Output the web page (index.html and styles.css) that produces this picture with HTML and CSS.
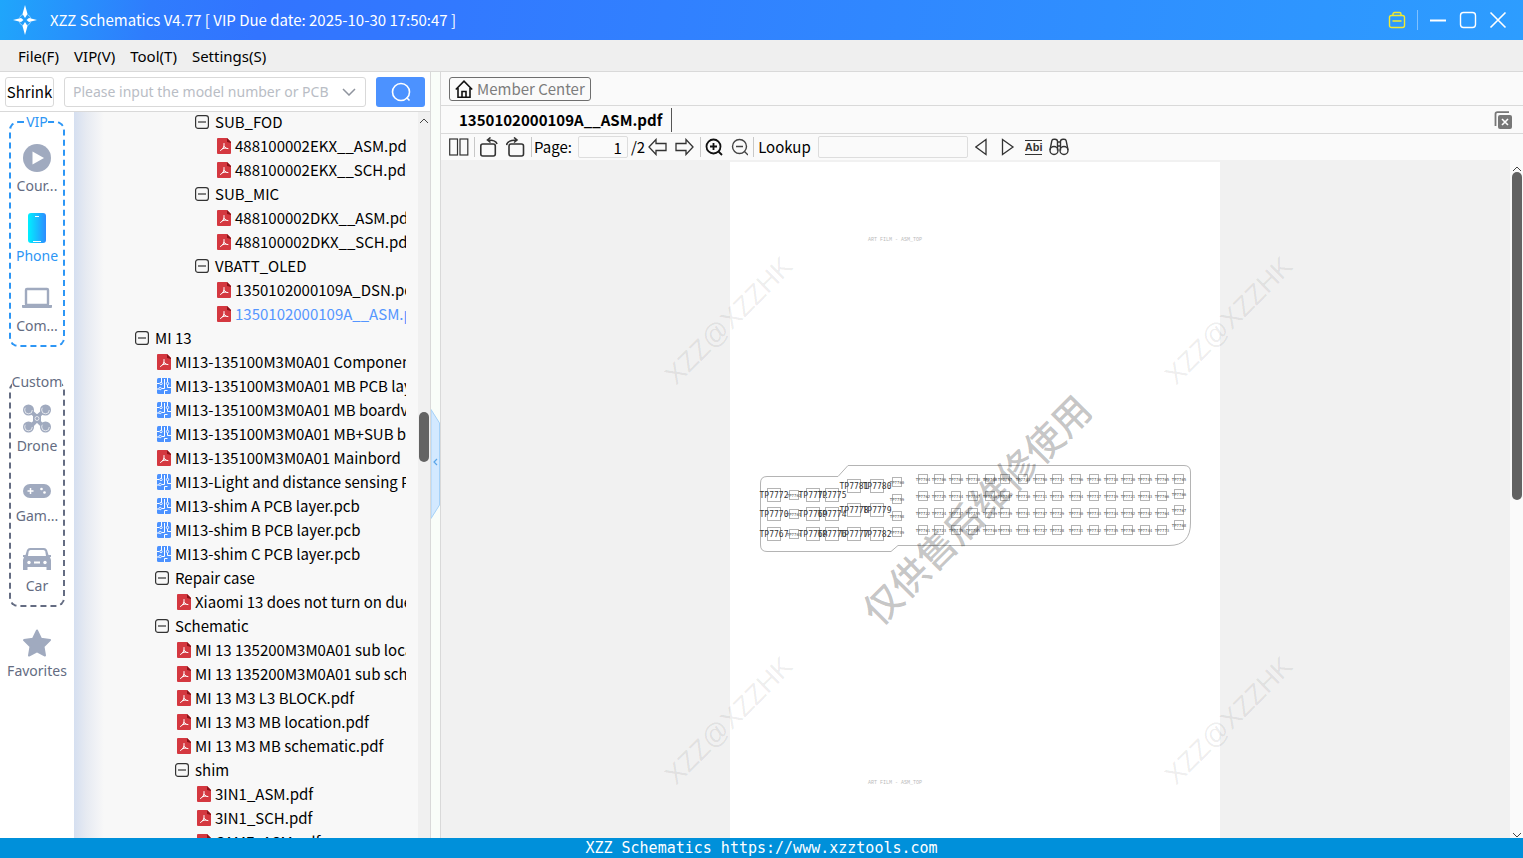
FILE: index.html
```html
<!DOCTYPE html>
<html lang="en-US" dir="ltr">
<head>
  <title>XZZ Schematics</title>
  <meta charset="UTF-8">
  <meta name="viewport" content="width=device-width, initial-scale=1">
  <link rel="stylesheet" href="styles.css">
</head>
<body>
  <svg class="sprite" aria-hidden="true">
    <symbol id="i-minus" viewBox="0 0 14 14"><rect x=".6" y=".6" width="12.8" height="12.8" rx="2.5" fill="none" stroke="#333" stroke-width="1.2"/><path d="M3 7h8" stroke="#333" stroke-width="1.2"/></symbol>
    <symbol id="i-pdf" viewBox="0 0 14 16"><path d="M1 0h9l4 4v11a1 1 0 0 1-1 1H1a1 1 0 0 1-1-1V1a1 1 0 0 1 1-1z" fill="#d43840"/><path d="M10 0l4 4v1l-4-1z" fill="#8c1219"/><path d="M7 5.500v3M7 8.500Q6.500 11 3.500 12.500M5.500 10.500Q8 9.500 11 10.500M7 8.500l2 1.500" fill="none" stroke="#fff" stroke-width="1" stroke-linecap="round"/></symbol>
    <symbol id="i-pcb" viewBox="0 0 14 16"><rect width="14" height="16" rx="1.500" fill="#4c92ff"/><path d="M4.500 0v4.500M0 5.500h2.500M7.500 1v9.500H4.500M10.500 0v4M10.500 7v2.500H14M7.500 16v-3.500h3M0 11h2" fill="none" stroke="#fff" stroke-width="1"/><g fill="#4c92ff" stroke="#fff" stroke-width=".9"><circle cx="4" cy="5.500" r="1.200"/><circle cx="3.200" cy="10.500" r="1.200"/><circle cx="10.500" cy="5.500" r="1.200"/></g></symbol>
  </svg>

  <header class="titlebar">
    <svg class="logo" width="24" height="30" viewBox="0 0 24 30"><circle cx="12" cy="15" r="6" fill="none" stroke="#8fd0ff" stroke-width="1" stroke-dasharray="6 3.400" stroke-dashoffset="-2"/><path d="M12 0l2.500 9L12 13 9.500 9zM12 30l2.500-9-2.500-4-2.500 4zM0 15l8-2 2.500 2L8 17zM24 15l-8-2-2.500 2 2.500 2z" fill="#fff"/></svg>
    <h1>XZZ Schematics V4.77 [ VIP Due date: 2025-10-30 17:50:47 ]</h1>
    <div class="window-buttons">
      <button aria-label="Toolbox"><svg width="18" height="18" viewBox="0 0 18 18" fill="none" stroke="#f2ea30" stroke-width="1.400"><rect x="1.500" y="4.500" width="15" height="12" rx="2"/><path d="M5 4.500V3a1.500 1.500 0 0 1 1.500-1.500h5A1.500 1.500 0 0 1 13 3v1.500M4.500 10h9"/></svg></button>
      <i class="split"></i>
      <button aria-label="Minimize"><svg width="18" height="18" viewBox="0 0 18 18"><path d="M1 9.500h16" stroke="#fff" stroke-width="2"/></svg></button>
      <button aria-label="Maximize"><svg width="18" height="18" viewBox="0 0 18 18"><rect x="1.500" y="1.500" width="15" height="15" rx="3" fill="none" stroke="#fff" stroke-width="1.400"/></svg></button>
      <button aria-label="Close"><svg width="18" height="18" viewBox="0 0 18 18"><path d="M1.500 1.500l15 15M16.500 1.500l-15 15" stroke="#fff" stroke-width="1.600"/></svg></button>
    </div>
  </header>

  <nav class="menubar">
    <button>File(F)</button>
    <button>VIP(V)</button>
    <button>Tool(T)</button>
    <button>Settings(S)</button>
  </nav>

  <main class="workspace">
    <section class="left">
      <form class="search">
        <button class="shrink" type="button">Shrink</button>
        <div class="combo">
          <input type="text" placeholder="Please input the model number or PCB" aria-label="Model number or PCB">
          <svg width="14" height="8" viewBox="0 0 14 8"><path d="M1 1l6 6 6-6" fill="none" stroke="#8f949e" stroke-width="1.500"/></svg>
        </div>
        <button class="go" type="submit" aria-label="Search"><svg width="20" height="20" viewBox="0 0 20 20" fill="none" stroke="#fff" stroke-width="1.600"><circle cx="10" cy="10" r="8.500"/><path d="M15.500 15.500l3 3"/></svg></button>
      </form>

      <div class="browser">
        <nav class="sidebar">
          <fieldset class="group vip">
            <legend>VIP</legend>
            <a class="cat" href="#"><svg width="30" height="30" viewBox="0 0 30 30"><circle cx="15" cy="15" r="14" fill="#a0aabf"/><path d="M10.500 8.500l11.500 6.500-11.500 6.500z" fill="#fff"/></svg>Cour...</a>
            <a class="cat active" href="#"><svg width="30" height="30" viewBox="0 0 30 30"><defs><linearGradient id="phone"><stop offset="0" stop-color="#00f0ff"/><stop offset="1" stop-color="#2d8cff"/></linearGradient></defs><rect x="6" width="18" height="30" rx="3" fill="url(#phone)"/><path d="M13 3.500h4M11 28.500h8" stroke="#fff" stroke-width="1"/></svg>Phone</a>
            <a class="cat" href="#"><svg width="30" height="30" viewBox="0 0 30 30"><rect x="4" y="6" width="22" height="16" rx="1" fill="none" stroke="#a0aabf" stroke-width="2.400"/><path d="M0 22h11.500l1 1h5l1-1H30v2.500l-1 .5H1l-1-.5z" fill="#a0aabf"/></svg>Com...</a>
          </fieldset>
          <fieldset class="group custom">
            <legend>Custom</legend>
            <a class="cat" href="#"><svg width="30" height="30" viewBox="0 0 30 30"><path d="M6 6l9 8 9-8M6 26l9-9 9 9" stroke="#a0aabf" stroke-width="4" fill="none"/><g fill="#a0aabf"><circle cx="6.500" cy="7" r="5.500"/><circle cx="23.500" cy="7" r="5.500"/><circle cx="6.500" cy="24" r="5.500"/><circle cx="23.500" cy="24" r="5.500"/><rect x="11" y="11" width="8" height="9" rx="2"/></g><g fill="none" stroke="#fff" stroke-width=".7"><circle cx="15" cy="15.500" r="2"/><circle cx="6.500" cy="7" r="3.800" stroke-dasharray="14 10"/><circle cx="23.500" cy="7" r="3.800" stroke-dasharray="14 10"/><circle cx="6.500" cy="24" r="3.800" stroke-dasharray="14 10"/><circle cx="23.500" cy="24" r="3.800" stroke-dasharray="14 10"/></g></svg>Drone</a>
            <a class="cat" href="#"><svg width="30" height="30" viewBox="0 0 30 30"><rect x="1" y="11" width="28" height="14" rx="7" fill="#a0aabf"/><path d="M5.500 18h6M8.500 15v6" stroke="#fff" stroke-width="1.500"/><circle cx="19.500" cy="16" r="1.300" fill="#fff"/><circle cx="22.500" cy="19.500" r="1.300" fill="#fff"/></svg>Gam...</a>
            <a class="cat" href="#"><svg width="30" height="30" viewBox="0 0 30 30"><path d="M8 5h14q2 0 3 2l1.500 5H29v2h-1l1 3v10h-4.500v-3h-19v3H1V17l1-3H1v-2h2.500L5 7q1-2 3-2z" fill="#a0aabf"/><path d="M8.500 7h13q1.300 0 1.800 1.500L24 13H6l.7-4.500Q7.200 7 8.500 7z" fill="#fff"/><g fill="#fff"><circle cx="7" cy="19.500" r="1.700"/><circle cx="23" cy="19.500" r="1.700"/><rect x="12" y="18.500" width="6" height="2"/></g></svg>Car</a>
          </fieldset>
          <a class="cat fav" href="#"><svg width="30" height="30" viewBox="0 0 30 30"><path d="M15 2.500l4 8.300 9 1.300-6.500 6.400 1.500 9L15 23.300 7 27.500l1.500-9L2 12.100l9-1.300z" fill="#a0aabf" stroke="#a0aabf" stroke-width="2" stroke-linejoin="round"/></svg>Favorites</a>
        </nav>

        <ul class="tree">
          <li class="lv3"><button><svg><use href="#i-minus"/></svg>SUB_FOD</button></li>
          <li class="lv4"><a href="#"><svg><use href="#i-pdf"/></svg>488100002EKX__ASM.pdf</a></li>
          <li class="lv4"><a href="#"><svg><use href="#i-pdf"/></svg>488100002EKX__SCH.pdf</a></li>
          <li class="lv3"><button><svg><use href="#i-minus"/></svg>SUB_MIC</button></li>
          <li class="lv4"><a href="#"><svg><use href="#i-pdf"/></svg>488100002DKX__ASM.pdf</a></li>
          <li class="lv4"><a href="#"><svg><use href="#i-pdf"/></svg>488100002DKX__SCH.pdf</a></li>
          <li class="lv3"><button><svg><use href="#i-minus"/></svg>VBATT_OLED</button></li>
          <li class="lv4"><a href="#"><svg><use href="#i-pdf"/></svg>1350102000109A_DSN.pdf</a></li>
          <li class="lv4 selected"><a href="#"><svg><use href="#i-pdf"/></svg>1350102000109A__ASM.pdf</a></li>
          <li class="lv0"><button><svg><use href="#i-minus"/></svg>MI 13</button></li>
          <li class="lv1"><a href="#"><svg><use href="#i-pdf"/></svg>MI13-135100M3M0A01 Component</a></li>
          <li class="lv1"><a href="#"><svg><use href="#i-pcb"/></svg>MI13-135100M3M0A01 MB PCB layer</a></li>
          <li class="lv1"><a href="#"><svg><use href="#i-pcb"/></svg>MI13-135100M3M0A01 MB boardview</a></li>
          <li class="lv1"><a href="#"><svg><use href="#i-pcb"/></svg>MI13-135100M3M0A01 MB+SUB board</a></li>
          <li class="lv1"><a href="#"><svg><use href="#i-pdf"/></svg>MI13-135100M3M0A01 Mainbord</a></li>
          <li class="lv1"><a href="#"><svg><use href="#i-pcb"/></svg>MI13-Light and distance sensing PCB</a></li>
          <li class="lv1"><a href="#"><svg><use href="#i-pcb"/></svg>MI13-shim A PCB layer.pcb</a></li>
          <li class="lv1"><a href="#"><svg><use href="#i-pcb"/></svg>MI13-shim B PCB layer.pcb</a></li>
          <li class="lv1"><a href="#"><svg><use href="#i-pcb"/></svg>MI13-shim C PCB layer.pcb</a></li>
          <li class="lv1"><button><svg><use href="#i-minus"/></svg>Repair case</button></li>
          <li class="lv2"><a href="#"><svg><use href="#i-pdf"/></svg>Xiaomi 13 does not turn on due to</a></li>
          <li class="lv1"><button><svg><use href="#i-minus"/></svg>Schematic</button></li>
          <li class="lv2"><a href="#"><svg><use href="#i-pdf"/></svg>MI 13 135200M3M0A01 sub location</a></li>
          <li class="lv2"><a href="#"><svg><use href="#i-pdf"/></svg>MI 13 135200M3M0A01 sub schematic</a></li>
          <li class="lv2"><a href="#"><svg><use href="#i-pdf"/></svg>MI 13 M3 L3 BLOCK.pdf</a></li>
          <li class="lv2"><a href="#"><svg><use href="#i-pdf"/></svg>MI 13 M3 MB location.pdf</a></li>
          <li class="lv2"><a href="#"><svg><use href="#i-pdf"/></svg>MI 13 M3 MB schematic.pdf</a></li>
          <li class="lv2"><button><svg><use href="#i-minus"/></svg>shim</button></li>
          <li class="lv3"><a href="#"><svg><use href="#i-pdf"/></svg>3IN1_ASM.pdf</a></li>
          <li class="lv3"><a href="#"><svg><use href="#i-pdf"/></svg>3IN1_SCH.pdf</a></li>
          <li class="lv3"><a href="#"><svg><use href="#i-pdf"/></svg>CAMF_ASM.pdf</a></li>
        </ul>

        <div class="scrollbar tree-scroll">
          <svg width="10" height="6" viewBox="0 0 10 6"><path d="M1 5l4-4 4 4" fill="none" stroke="#444"/></svg>
          <div class="thumb"></div>
        </div>
      </div>
    </section>

    <div class="divider">
      <button aria-label="Collapse panel"><svg width="9" height="110" viewBox="0 0 9 110"><path d="M0 .5L8.500 14V96L0 109.500z" fill="#d3e9ff" stroke="#a5d1f7"/><path d="M6 50L3 53l3 3" fill="none" stroke="#5aa5e8" stroke-width="1.200"/></svg></button>
    </div>

    <section class="right">
      <div class="member-row">
        <button class="member"><svg width="18" height="18" viewBox="0 0 18 18" fill="none" stroke="#111" stroke-width="1.600"><path d="M.8 9.500L9 1.200l8.200 8.300M3 8v9.200h12V8M7 17v-5.500h4V17"/></svg>Member Center</button>
      </div>
      <div class="tabs">
        <button class="tab">1350102000109A__ASM.pdf</button>
        <button class="close-all" aria-label="Close all tabs"><svg width="18" height="18" viewBox="0 0 18 18"><path d="M1.500 15V3Q1.500 1.200 3.500 1.200H15" fill="none" stroke="#777" stroke-width="1.800"/><rect x="4" y="4" width="14" height="14" rx="2" fill="#777"/><path d="M8 8l6 6M14 8l-6 6" stroke="#fff" stroke-width="1.600"/></svg></button>
      </div>
      <div class="toolbar">
        <button aria-label="Two pages"><svg width="20" height="18" viewBox="0 0 20 18" fill="none" stroke="#333" stroke-width="1.200"><rect x=".7" y="1" width="7.800" height="16"/><rect x="11" y="1" width="7.800" height="16"/></svg></button>
        <i class="sep"></i>
        <button aria-label="Rotate left"><svg width="20" height="20" viewBox="0 0 20 20" fill="none" stroke="#333" stroke-width="1.600"><rect x="1.800" y="7" width="14.500" height="12" rx="2"/><path d="M18 7q-1-4-9-4M11.500 .5L8.500 3l3 2.500"/></svg></button>
        <button aria-label="Rotate right"><svg width="20" height="20" viewBox="0 0 20 20" fill="none" stroke="#333" stroke-width="1.600"><rect x="3" y="7" width="14.500" height="12" rx="2"/><path d="M.5 8q1-5 10-5M8 .5L11 3 8 5.500"/></svg></button>
        <i class="sep"></i>
        <label class="page-label" for="page">Page:</label>
        <input id="page" class="page-no" type="text" value="1">
        <span class="total">/2</span>
        <button aria-label="Previous page"><svg width="20" height="18" viewBox="0 0 20 18" fill="none" stroke="#333" stroke-width="1.300"><path d="M1 9l7-7.500v4h10v7H8v4z"/></svg></button>
        <button aria-label="Next page"><svg width="20" height="18" viewBox="0 0 20 18" fill="none" stroke="#333" stroke-width="1.300"><path d="M18 9l-7-7.500v4H1v7h10v4z"/></svg></button>
        <i class="sep"></i>
        <button aria-label="Zoom in"><svg width="18" height="18" viewBox="0 0 18 18" fill="none" stroke="#111" stroke-width="1.800"><circle cx="8.500" cy="8.500" r="7"/><path d="M13.500 13.500l3.500 3.500M5 8.500h7M8.500 5v7"/></svg></button>
        <button aria-label="Zoom out"><svg width="18" height="18" viewBox="0 0 18 18" fill="none" stroke="#444" stroke-width="1.400"><circle cx="9.500" cy="8.500" r="7"/><path d="M14.500 13.500l3.500 3.500M6 8.500h7"/></svg></button>
        <i class="sep"></i>
        <label for="lookup">Lookup</label>
        <input id="lookup" class="lookup" type="text">
        <button aria-label="Find previous"><svg width="18" height="18" viewBox="0 0 18 18" fill="none" stroke="#333" stroke-width="1.300"><path d="M11 1.500v15L.8 9z"/></svg></button>
        <button aria-label="Find next"><svg width="18" height="18" viewBox="0 0 18 18" fill="none" stroke="#333" stroke-width="1.300"><path d="M2.500 1.500v15L13 9z"/></svg></button>
        <button class="match">Abi</button>
        <button aria-label="Find all"><svg width="20" height="18" viewBox="0 0 20 18" fill="none" stroke="#333" stroke-width="1.400"><circle cx="5" cy="12.500" r="4"/><circle cx="15" cy="12.500" r="4"/><path d="M1 12l1.800-9Q3 1.200 5 1.200h1q2.500 0 2.500 2.300v9M19 12l-1.800-9q-.2-1.800-2.200-1.800h-1q-2.500 0-2.500 2.300v9M8.500 4h3M8.500 8h3"/></svg></button>
      </div>

      <div class="viewer">
        <div class="canvas">
          <div class="sheet">
            <svg class="drawing" width="490" height="676" viewBox="0 0 490 676">
              <text class="film" x="138" y="79">ART FILM - ASM_TOP</text>
              <text class="film" x="138" y="622">ART FILM - ASM_TOP</text>
              <path class="outline" d="M37 314.500H108L118 303.500H454Q460.500 303.500 460.500 310V361Q460.500 383.500 439 383.500H168L161 389.500H37Q30.500 389.500 30.500 383V321Q30.500 314.500 37 314.500Z"/>
              <g id="pads"></g>
              <g class="mark">
                <text transform="translate(-2 158) rotate(-45)" dy="10">XZZ@XZZHK</text>
                <text transform="translate(498 158) rotate(-45)" dy="10">XZZ@XZZHK</text>
                <text transform="translate(-2 558) rotate(-45)" dy="10">XZZ@XZZHK</text>
                <text transform="translate(498 558) rotate(-45)" dy="10">XZZ@XZZHK</text>
              </g>
              <text class="notice" transform="translate(247 348) rotate(-45)" dy="14">仅供售后维修使用</text>
            </svg>
          </div>
        </div>
        <div class="scrollbar page-scroll">
          <svg width="10" height="6" viewBox="0 0 10 6"><path d="M1 5l4-4 4 4" fill="none" stroke="#444"/></svg>
          <div class="thumb"></div>
          <svg class="down" width="10" height="6" viewBox="0 0 10 6"><path d="M1 1l4 4 4-4" fill="none" stroke="#444"/></svg>
        </div>
      </div>
    </section>
  </main>

  <footer class="status">XZZ Schematics https://www.xzztools.com</footer>
  <script src="board.js"></script>
</body>
</html>
```
FILE: styles.css
```css
* {
  box-sizing: border-box;
}
body {
  color: #000;
  display: flex;
  flex-direction: column;
  font-family: "Noto Sans CJK SC", "Noto Sans", sans-serif;
  font-size: 15px;
  height: 100vh;
  line-height: 20px;
  margin: 0;
  overflow: hidden;
}
button {
  align-items: center;
  background: none;
  border: 0;
  color: inherit;
  display: flex;
  font: inherit;
  padding: 0;
}
input {
  font: inherit;
  min-width: 0;
}
a {
  color: inherit;
  text-decoration: none;
}
svg {
  flex: none;
}
.sprite {
  height: 0;
  position: absolute;
  width: 0;
}

/* TITLE AND MENU */
.titlebar {
  align-items: center;
  background: linear-gradient(100deg, #1fa6fb 0, #2f7cfd 150px, #3274ff 260px, #3279ff 450px, #2d9dff 100%);
  color: #FFF;
  display: flex;
  flex: none;
  height: 40px;
  padding: 0 16px 0 13px;
}
.titlebar h1 {
  flex: 1;
  font-size: 15px;
  font-weight: 400;
  margin: 0 0 0 13px;
}
.window-buttons {
  align-items: center;
  display: flex;
  gap: 12px;
}
.split {
  background: #7fc1ff;
  height: 20px;
  margin: 0 -1px;
  width: 1px;
}
.menubar {
  background: #EFEFEF;
  border-bottom: 1px solid #D9D9D9;
  display: flex;
  flex: none;
  font-family: "Noto Sans", sans-serif;
  gap: 15px;
  height: 32px;
  padding: 0 18px;
}
.workspace {
  display: flex;
  flex: 1;
  min-height: 0;
}

/* LEFT PANEL */
.left {
  border-right: 1px solid #D9D9D9;
  display: flex;
  flex: none;
  flex-direction: column;
  width: 431px;
}
.search {
  border-bottom: 1px solid #D9D9D9;
  display: flex;
  flex: none;
  gap: 10px;
  height: 40px;
  padding: 5px 5px 4px;
}
.shrink {
  border: 1px solid #D9D9D9;
  border-radius: 3px;
  height: 30px;
  justify-content: center;
  width: 49px;
}
.combo {
  align-items: center;
  border: 1px solid #D9D9D9;
  border-radius: 3px;
  display: flex;
  flex: 1;
  height: 30px;
  min-width: 0;
  padding: 0 9px 0 8px;
}
.combo input {
  background: none;
  border: 0;
  flex: 1;
  font: 14px/20px "Noto Sans", sans-serif;
  padding: 0;
}
.combo input::placeholder {
  color: #B9BDC5;
}
.go {
  background: #4C92FF;
  border-radius: 3px;
  height: 30px;
  justify-content: center;
  width: 49px;
}
.browser {
  display: flex;
  flex: 1;
  min-height: 0;
}
.sidebar {
  background: #FFF;
  color: #646C82;
  flex: none;
  font-family: "Noto Sans", sans-serif;
  font-size: 14px;
  width: 74px;
}
.group {
  border: 2px dashed currentColor;
  border-radius: 9px;
  margin: 0 9px 25px;
  min-width: 0;
  padding: 3px 0 0;
}
.group legend {
  height: 20px;
  margin: 0 auto;
  padding: 0;
}
.vip {
  border-color: #2D96F5;
}
.vip legend {
  color: #2D96F5;
}
.custom {
  margin-bottom: 13px;
}
.cat {
  align-items: center;
  display: flex;
  flex-direction: column;
  gap: 3px;
  height: 70px;
  padding-top: 8px;
  white-space: nowrap;
}
.cat.active {
  color: #2D96F5;
}
.tree {
  background: linear-gradient(90deg, #D5DFF0 0, #E6EAF2 12px, #F8F8F8 30px);
  flex: 1;
  list-style: none;
  margin: 0;
  min-width: 0;
  overflow: hidden;
  padding: 0 12px 0 61px;
}
.tree li {
  --lv: 0;
  height: 24px;
  overflow: hidden;
  padding-left: calc(var(--lv) * 20px);
  white-space: nowrap;
}
.tree li:first-child {
  margin-top: -2px;
}
.tree .lv1 { --lv: 1; }
.tree .lv2 { --lv: 2; }
.tree .lv3 { --lv: 3; }
.tree .lv4 { --lv: 4; }
.tree button,
.tree a {
  align-items: center;
  display: flex;
  gap: 6px;
  height: 24px;
}
.tree a {
  gap: 4px;
  padding-left: 2px;
}
.tree svg {
  height: 16px;
  width: 14px;
}
.selected {
  color: #5596FF;
}

/* SCROLLBARS */
.scrollbar {
  align-items: center;
  background: #F0F0F0;
  display: flex;
  flex: none;
  flex-direction: column;
  width: 12px;
}
.thumb {
  background: #636363;
  border-radius: 5px;
  width: 10px;
}
.tree-scroll {
  padding-top: 6px;
}
.tree-scroll .thumb {
  height: 50px;
  margin-top: 288px;
}
.page-scroll {
  background: #FAFAFA;
  padding-top: 6px;
  width: 13px;
}
.page-scroll .thumb {
  height: 328px;
}
.page-scroll .down {
  margin-top: auto;
}

/* DIVIDER */
.divider {
  align-items: center;
  background: #F9FDF9;
  border-right: 1px solid #D9D9D9;
  display: flex;
  flex: none;
  padding-top: 18px;
  width: 10px;
}

/* RIGHT PANEL */
.right {
  background: #FAFAFA;
  display: flex;
  flex: 1;
  flex-direction: column;
  min-width: 0;
}
.member-row {
  border-bottom: 1px solid #D9D9D9;
  flex: none;
  height: 34px;
  padding: 5px 8px;
}
.member {
  border: 1px solid #6E6E6E;
  border-radius: 3px;
  color: #7D7D7D;
  gap: 4px;
  height: 24px;
  padding: 0 5px;
}
.tabs {
  align-items: center;
  border-bottom: 1px solid #D9D9D9;
  display: flex;
  flex: none;
  height: 28px;
  justify-content: space-between;
  padding-right: 11px;
}
.tab {
  border-right: 1px solid #555;
  font-weight: 700;
  height: 24px;
  padding: 0 9px 0 18px;
}
.toolbar {
  align-items: center;
  display: flex;
  flex: none;
  gap: 7px;
  height: 26px;
  padding-left: 8px;
}
.toolbar input {
  background: #FAFAFA;
  border: 1px solid #DDD;
  border-radius: 2px;
  height: 22px;
  padding: 0 5px;
}
.page-label {
  margin: 0 -1px 0 -2px;
}
.page-no {
  text-align: right;
  width: 50px;
}
.total {
  margin: 0 -4px;
}
.toolbar .lookup {
  width: 150px;
}
.sep {
  background: #C8C8C8;
  height: 20px;
  margin: 0 -3px 0 -2px;
  width: 1px;
}
.toolbar .match {
  border-bottom: 1px solid #333;
  border-top: 1px solid #333;
  color: #333;
  font: 700 11px/13px "Liberation Sans", sans-serif;
}
.viewer {
  background: #F1F1F1;
  display: flex;
  flex: 1;
  min-height: 0;
}
.canvas {
  display: flex;
  flex: 1;
  justify-content: center;
  overflow: hidden;
  padding: 2px 1px 0 0;
}
.sheet {
  background: #FFF;
  width: 490px;
}
.drawing {
  display: block;
  overflow: visible;
}
.outline,
.pad {
  fill: none;
  stroke: #B4B4B4;
}
.pad-label {
  fill: #555;
  font: 4px "DejaVu Sans Mono", monospace;
  text-anchor: middle;
}
.pad-label.big {
  fill: #333;
  font-size: 8px;
}
.film {
  fill: #BBB;
  font: 5px "Liberation Mono", monospace;
}
.mark text {
  fill: #000;
  fill-opacity: .08;
  font: 27px "Liberation Sans", sans-serif;
  text-anchor: middle;
}
.notice {
  fill: #000;
  fill-opacity: .23;
  font: 500 38px "Noto Sans CJK SC", sans-serif;
  text-anchor: middle;
}

/* STATUS */
.status {
  background: #0090DA;
  color: #FFF;
  flex: none;
  font: 15px/20px "DejaVu Sans Mono", monospace;
  height: 20px;
  text-align: center;
}
```
FILE: board.js
```js
// test points: x, y, pad size, label
const points = [
  [44, 333, 13, 'TP7772'], [44, 352, 13, 'TP7770'], [44, 372, 13, 'TP7767'],
  [64, 333, 9, 'TP7762'], [64, 352, 9, 'TP7761'], [64, 372, 9, 'TP7763'],
  [83, 333, 13, 'TP7771'], [83, 352, 13, 'TP7769'], [83, 372, 13, 'TP7768'],
  [102, 333, 13, 'TP7775'], [102, 352, 13, 'TP7774'], [102, 372, 13, 'TP7776'],
  [124, 324, 13, 'TP7781'], [124, 348, 13, 'TP7778'], [124, 372, 13, 'TP7777'],
  [147, 324, 13, 'TP7780'], [147, 348, 13, 'TP7779'], [147, 372, 13, 'TP7782'],
  [167, 320, 9, 'TP7760'], [167, 337, 9, 'TP7759'], [167, 354, 9, 'TP7758'], [167, 370, 9, 'TP7749'],
  [449, 317, 9, 'TP7765'], [449, 332, 9, 'TP7766'], [449, 348, 9, 'TP7767'], [449, 363, 9, 'TP7768']
];

const columns = [193, 209, 226, 243, 260, 275, 293, 310, 327, 346, 364, 381, 398, 415, 432];
const rows = [
  [317, [7704, 7706, 7708, 7738, 7748, 7757, 7743, 7750, 7714, 7756, 7736, 7718, 7720, 7745, 7765]],
  [334, [7762, 7725, 7744, 7707, 7746, 7747, 7710, 7711, 7715, 7754, 7717, 7719, 7721, 7743, 7766]],
  [351, [7722, 7724, 7737, 7755, 7709, 7739, 7741, 7747, 7729, 7730, 7733, 7734, 7752, 7742, 7764]],
  [368, [7761, 7723, 7735, 7705, 7740, 7753, 7751, 7727, 7728, 7731, 7732, 7735, 7758, 7744, 7773]]
];
rows.forEach(([y, labels]) => {
  labels.forEach((label, i) => points.push([columns[i], y, 9, `TP${label}`]));
});

document.getElementById('pads').innerHTML = points.map(([x, y, size, label]) => {
  const big = size > 9;
  const edge = (size - 1) / 2;
  return `<rect class="pad" x="${x - edge - 0.5}" y="${y - edge - 0.5}" width="${size}" height="${size}"/>
    <text class="pad-label${big ? ' big' : ''}" x="${x}" y="${y + (big ? 3 : 2)}">${label}</text>`;
}).join('');
```
